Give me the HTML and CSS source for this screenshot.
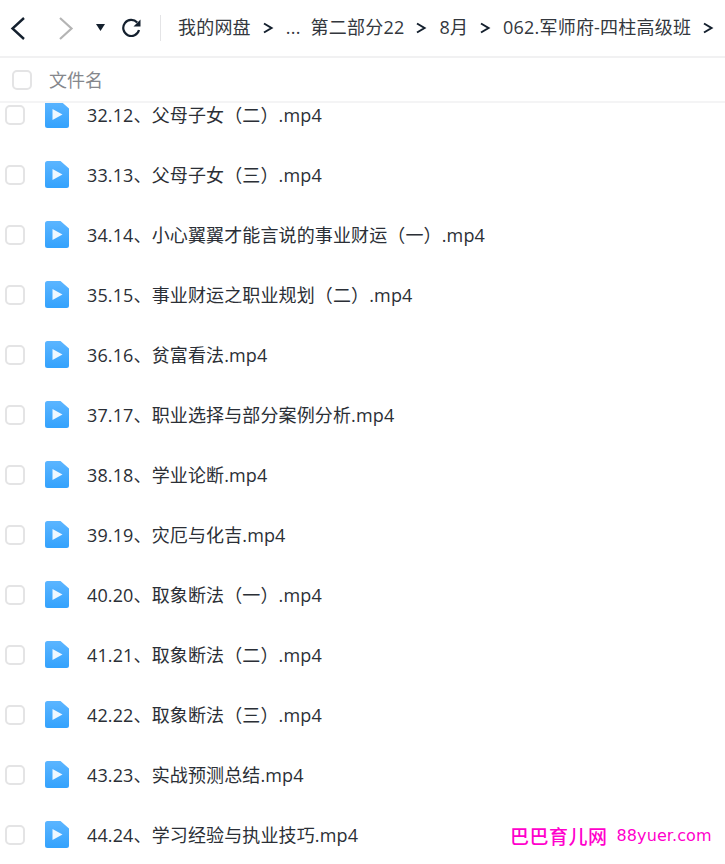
FILE: index.html
```html
<!DOCTYPE html>
<html lang="zh">
<head>
<meta charset="utf-8">
<title>我的网盘</title>
<link rel="stylesheet" href="styles.css">
</head>
<body>
<div class="page">
  <header class="topbar">
    <svg class="ic back" width="18" height="24" viewBox="0 0 18 24"><path d="M15 2 3.500 12.500 15 23" fill="none" stroke="#14202e" stroke-width="2.400"/></svg>
    <svg class="ic fwd" width="18" height="24" viewBox="0 0 18 24"><path d="M3 2 14.500 12.500 3 23" fill="none" stroke="#b4b4b4" stroke-width="2.200"/></svg>
    <svg class="ic drop" width="9" height="7" viewBox="0 0 9 7"><path d="M0 0H9L4.500 7Z" fill="#14202e"/></svg>
    <svg class="ic reload" width="20" height="20" viewBox="0 0 20 20"><path d="M16.200 4.600A8 8 0 1 0 18 12" fill="none" stroke="#14202e" stroke-width="2.200"/><path d="M19.500 1.500V8.500H12.500Z" fill="#14202e"/></svg>
    <span class="divider"></span>
    <nav class="crumbs">
      <span>我的网盘</span><svg class="sep" width="12" height="12" viewBox="0 0 12 12"><path d="M2 1.500 9.500 6 2 10.500" fill="none" stroke="#14202e" stroke-width="2"/></svg>
      <span class="dots">...</span>
      <span>第二部分22</span><svg class="sep" width="12" height="12" viewBox="0 0 12 12"><path d="M2 1.500 9.500 6 2 10.500" fill="none" stroke="#14202e" stroke-width="2"/></svg>
      <span>8月</span><svg class="sep" width="12" height="12" viewBox="0 0 12 12"><path d="M2 1.500 9.500 6 2 10.500" fill="none" stroke="#14202e" stroke-width="2"/></svg>
      <span>062.军师府-四柱高级班</span><svg class="sep" width="12" height="12" viewBox="0 0 12 12"><path d="M2 1.500 9.500 6 2 10.500" fill="none" stroke="#14202e" stroke-width="2"/></svg>
    </nav>
  </header>
  <div class="listhead">
    <span class="check"></span>
    <span class="headname">文件名</span>
  </div>
  <div class="scroller">
    <ul class="list" id="list"></ul>
  </div>
  <div class="watermark"><span class="wm-cn">巴巴育儿网</span><span class="wm-en">88yuer.com</span></div>
</div>
<template id="row">
  <li class="row">
    <span class="check"></span>
    <svg class="fileicon" width="24" height="27" viewBox="0 0 24 27"><defs><linearGradient id="fg" x1="0" y1="0" x2="0" y2="1"><stop offset="0" stop-color="#5cb5ff"/><stop offset="1" stop-color="#33a2fd"/></linearGradient></defs><path d="M2.500 0H15.500L24 7.500V24.500A2.500 2.500 0 0 1 21.500 27H2.500A2.500 2.500 0 0 1 0 24.500V2.500A2.500 2.500 0 0 1 2.500 0Z" fill="url(#fg)"/><path d="M7.500 8 17.500 13.500 7.500 19Z" fill="#eef7ff"/></svg>
    <span class="name"></span>
  </li>
</template>
<script src="list.js"></script>
</body>
</html>
```
FILE: list.js
```js
var names = ["32.12、父母子女（二）.mp4","33.13、父母子女（三）.mp4","34.14、小心翼翼才能言说的事业财运（一）.mp4","35.15、事业财运之职业规划（二）.mp4","36.16、贫富看法.mp4","37.17、职业选择与部分案例分析.mp4","38.18、学业论断.mp4","39.19、灾厄与化吉.mp4","40.20、取象断法（一）.mp4","41.21、取象断法（二）.mp4","42.22、取象断法（三）.mp4","43.23、实战预测总结.mp4","44.24、学习经验与执业技巧.mp4"];
var list = document.getElementById("list");
var tpl = document.getElementById("row");
names.forEach(function (n) {
  var node = tpl.content.cloneNode(true);
  node.querySelector(".name").textContent = n;
  list.appendChild(node);
});
```
FILE: styles.css
```css
* { box-sizing: border-box; }
html, body { margin: 0; padding: 0; background: #fff; }
body { font-family: "Open Sans", "Noto Sans CJK SC", sans-serif; color: #2b2f36; }
.page { position: relative; width: 725px; height: 864px; overflow: hidden; display: flex; flex-direction: column; }
.topbar { flex: none; height: 58px; border-bottom: 2px solid #f1f1f2; display: flex; align-items: center; padding-left: 9px; padding-bottom: 1px; }
.ic { flex: none; display: block; }
.back { margin-right: 30px; }
.fwd { margin-right: 21px; }
.drop { margin-right: 16px; }
.reload { margin-right: 19px; }
.divider { flex: none; width: 1px; height: 26px; background: #e4e4e6; margin-right: 17px; }
.crumbs { display: flex; align-items: center; padding-bottom: 2px; font-size: 18px; letter-spacing: 0.2px; white-space: nowrap; color: #33373d; }
.crumbs span { line-height: 26px; }
.sep { flex: none; margin: 2px 12px 0 11px; }
.dots { margin-right: 10px; }
.listhead { flex: none; height: 45px; border-bottom: 2px solid #f4f4f5; display: flex; align-items: center; padding-left: 12px; padding-top: 1px; }
.headname { font-size: 18px; line-height: 26px; color: #85878c; margin-left: 17px; }
.check { flex: none; display: block; width: 20px; height: 20px; border: 2px solid #e4e4e5; border-radius: 5px; background: #fff; }
.scroller { flex: 1; overflow: hidden; }
.list { list-style: none; margin: -18px 0 0; padding: 0; }
.row { height: 60px; display: flex; align-items: center; padding-left: 5px; }
.fileicon { flex: none; margin: -1px 0 0 20px; }
.name { margin-left: 18px; font-size: 18px; line-height: 26px; letter-spacing: 0.13px; color: #2b2f36; white-space: nowrap; }
.watermark { position: absolute; left: 510px; top: 824px; display: flex; align-items: center; line-height: 24px; color: #ff00cc; white-space: nowrap; }
.wm-cn { font-size: 19px; letter-spacing: 0.5px; font-family: "Noto Sans CJK SC", sans-serif; font-weight: 500; }
.wm-en { margin-left: 9px; font-size: 16px; letter-spacing: 0.1px; font-family: "DejaVu Sans", sans-serif; }
```
